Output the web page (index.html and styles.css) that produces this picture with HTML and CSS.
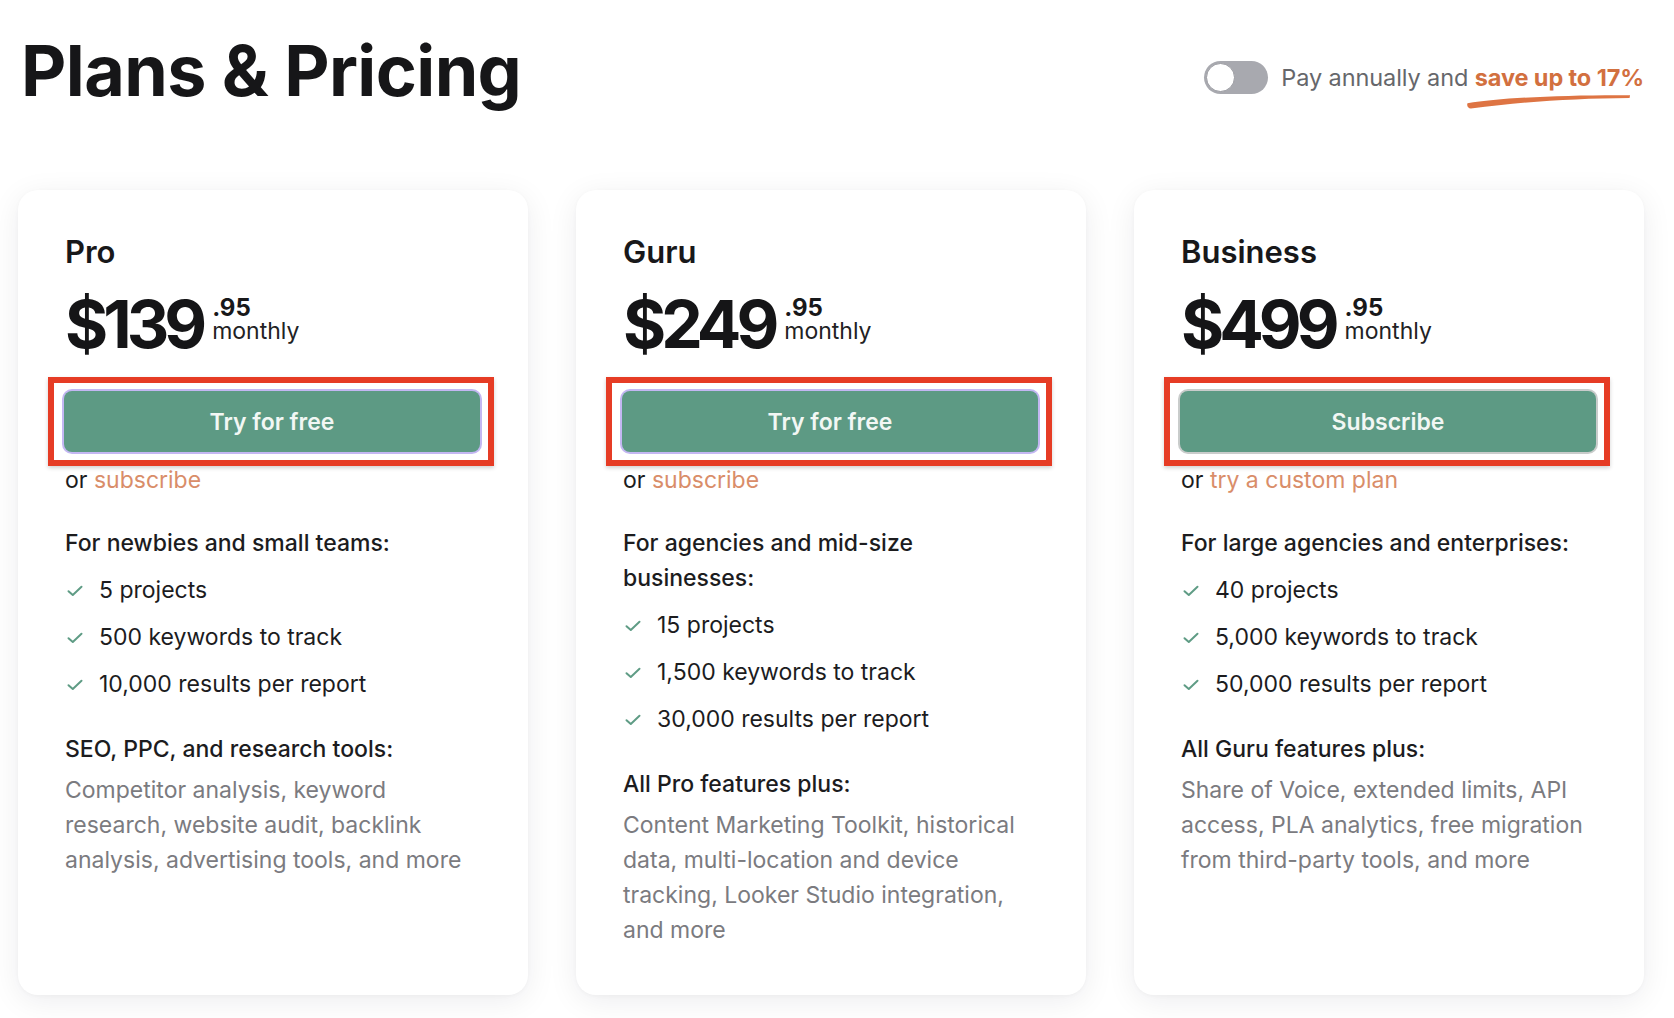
FILE: index.html
```html
<!DOCTYPE html>
<html lang="en">
<head>
<meta charset="utf-8">
<title>Plans &amp; Pricing</title>
<link rel="stylesheet" href="styles.css">
</head>
<body>
<div class="page">
  <header class="header">
    <h1 class="title">Plans &amp; Pricing</h1>
    <div class="billing">
      <span class="toggle"><span class="knob"></span></span>
      <span class="billing-text">Pay annually and <span class="save">save up to 17%<svg class="swoosh" viewBox="0 0 170 18" preserveAspectRatio="none"><path d="M0.5 11.5 C 35 5.5, 100 2, 168 2.5 L 167.5 5.5 C 110 6, 60 9.5, 4 17.5 C 1 17.5, -0.5 14.5, 0.5 11.5 Z"/></svg></span></span>
    </div>
  </header>

  <main class="plans">
    <section class="card">
      <h2 class="plan-name">Pro</h2>
      <div class="price">
        <span class="amount">$139</span>
        <span class="price-side"><span class="cents">.95</span><span class="period">monthly</span></span>
      </div>
      <div class="highlight"><button class="cta">Try for free</button></div>
      <p class="alt">or <a class="link">subscribe</a></p>
      <h3 class="group">For newbies and small teams:</h3>
      <ul class="features">
        <li><svg class="check" viewBox="0 0 16 12"><path d="M1.5 6.2 L5.8 10 L14.5 1.8"/></svg>5 projects</li>
        <li><svg class="check" viewBox="0 0 16 12"><path d="M1.5 6.2 L5.8 10 L14.5 1.8"/></svg>500 keywords to track</li>
        <li><svg class="check" viewBox="0 0 16 12"><path d="M1.5 6.2 L5.8 10 L14.5 1.8"/></svg>10,000 results per report</li>
      </ul>
      <h3 class="group group-2">SEO, PPC, and research tools:</h3>
      <p class="desc">Competitor analysis, keyword research, website audit, backlink analysis, advertising tools, and more</p>
    </section>

    <section class="card">
      <h2 class="plan-name">Guru</h2>
      <div class="price">
        <span class="amount">$249</span>
        <span class="price-side"><span class="cents">.95</span><span class="period">monthly</span></span>
      </div>
      <div class="highlight"><button class="cta">Try for free</button></div>
      <p class="alt">or <a class="link">subscribe</a></p>
      <h3 class="group">For agencies and mid-size businesses:</h3>
      <ul class="features">
        <li><svg class="check" viewBox="0 0 16 12"><path d="M1.5 6.2 L5.8 10 L14.5 1.8"/></svg>15 projects</li>
        <li><svg class="check" viewBox="0 0 16 12"><path d="M1.5 6.2 L5.8 10 L14.5 1.8"/></svg>1,500 keywords to track</li>
        <li><svg class="check" viewBox="0 0 16 12"><path d="M1.5 6.2 L5.8 10 L14.5 1.8"/></svg>30,000 results per report</li>
      </ul>
      <h3 class="group group-2">All Pro features plus:</h3>
      <p class="desc">Content Marketing Toolkit, historical data, multi-location and device tracking, Looker Studio integration, and more</p>
    </section>

    <section class="card">
      <h2 class="plan-name">Business</h2>
      <div class="price">
        <span class="amount">$499</span>
        <span class="price-side"><span class="cents">.95</span><span class="period">monthly</span></span>
      </div>
      <div class="highlight highlight-grey"><button class="cta">Subscribe</button></div>
      <p class="alt">or <a class="link">try a custom plan</a></p>
      <h3 class="group">For large agencies and enterprises:</h3>
      <ul class="features">
        <li><svg class="check" viewBox="0 0 16 12"><path d="M1.5 6.2 L5.8 10 L14.5 1.8"/></svg>40 projects</li>
        <li><svg class="check" viewBox="0 0 16 12"><path d="M1.5 6.2 L5.8 10 L14.5 1.8"/></svg>5,000 keywords to track</li>
        <li><svg class="check" viewBox="0 0 16 12"><path d="M1.5 6.2 L5.8 10 L14.5 1.8"/></svg>50,000 results per report</li>
      </ul>
      <h3 class="group group-2">All Guru features plus:</h3>
      <p class="desc">Share of Voice, extended limits, API access, PLA analytics, free migration from third-party tools, and more</p>
    </section>
  </main>
</div>
</body>
</html>
```

FILE: styles.css
```css
* { box-sizing: border-box; }

html, body {
  margin: 0;
  padding: 0;
  background: #ffffff;
}

body {
  font-family: Inter, "Noto Sans", "Liberation Sans", sans-serif;
  color: #1c1c1e;
  width: 1674px;
  height: 1018px;
  overflow: hidden;
}

.page {
  padding: 0 30px 0 18px;
}

.header {
  display: flex;
  justify-content: space-between;
  align-items: flex-start;
  height: 190px;
}

.title {
  margin: 36px 0 0 3px;
  font-size: 70px;
  line-height: 1;
  font-weight: 700;
  letter-spacing: -0.6px;
  color: #161618;
}

.billing {
  display: flex;
  align-items: center;
  gap: 13px;
  margin-top: 61px;
}

.toggle {
  width: 64px;
  height: 33px;
  border-radius: 17px;
  background: #a8a9af;
  padding: 2px;
  display: flex;
  align-items: center;
}

.knob {
  width: 29px;
  height: 29px;
  border-radius: 50%;
  background: #ffffff;
  border: 1.5px solid #9a9ba1;
}

.billing-text {
  font-size: 23.5px;
  color: #66676b;
  letter-spacing: -0.1px;
}

.save {
  position: relative;
  color: #d2703f;
  font-weight: 700;
}

.swoosh {
  position: absolute;
  left: -8px;
  top: 100%;
  margin-top: 1px;
  width: 165px;
  height: 16px;
  fill: #de7443;
}

.plans {
  display: flex;
  gap: 48px;
}

.card {
  width: 510px;
  height: 805px;
  background: #ffffff;
  border-radius: 20px;
  box-shadow: 0 6px 30px rgba(20, 20, 40, 0.075), 0 1px 4px rgba(20, 20, 40, 0.03);
  padding: 43px 55px 0 47px;
}

.plan-name {
  margin: 0;
  font-size: 31px;
  line-height: 38px;
  font-weight: 600;
  color: #18181a;
}

.price {
  display: flex;
  align-items: flex-start;
  margin-top: 20px;
  gap: 9px;
}

.amount {
  font-size: 66px;
  line-height: 66px;
  font-weight: 700;
  letter-spacing: -5px;
  color: #151517;
}

.price-side {
  display: flex;
  flex-direction: column;
  margin-top: 5px;
  margin-left: 1px;
}

.cents {
  font-size: 24px;
  line-height: 24px;
  font-weight: 700;
  color: #18181a;
}

.period {
  font-size: 23px;
  line-height: 23px;
  color: #222224;
}

.highlight {
  margin: 20px -21px 0 -17px;
  border: 6px solid #e63c25;
  padding: 8px 8px 8px 10px;
  box-shadow: 0 2px 4px rgba(0, 0, 0, 0.18);
}

.cta {
  display: block;
  width: 100%;
  height: 61px;
  border: none;
  border-radius: 8px;
  background: #5d9a84;
  color: #f2f7f4;
  font-family: Inter, "Noto Sans", "Liberation Sans", sans-serif;
  font-size: 23px;
  font-weight: 600;
  box-shadow: 0 0 0 2px #c3b7f2;
}

.highlight-grey .cta {
  box-shadow: 0 0 0 2px #c9cccb;
}

.alt {
  margin: -3px 0 0;
  font-size: 23px;
  line-height: 35px;
  color: #1c1c1e;
}

.link {
  color: #d98d69;
}

.group {
  margin: 28px 0 0;
  font-size: 23px;
  line-height: 35px;
  font-weight: 500;
  color: #1c1c1e;
}

.group-2 {
  margin-top: 30px;
}

.features {
  list-style: none;
  margin: 12px 0 0;
  padding: 0;
  display: flex;
  flex-direction: column;
  gap: 12px;
}

.features li {
  display: flex;
  align-items: center;
  font-size: 23px;
  line-height: 35px;
  color: #1c1c1e;
}

.check {
  width: 16px;
  height: 12px;
  margin: 0 16px 0 2px;
  fill: none;
  stroke: #5f9c85;
  stroke-width: 2;
  stroke-linecap: round;
  stroke-linejoin: round;
}

.desc {
  margin: 6px 0 0;
  font-size: 23px;
  line-height: 35px;
  color: #7b7b7f;
}
```
